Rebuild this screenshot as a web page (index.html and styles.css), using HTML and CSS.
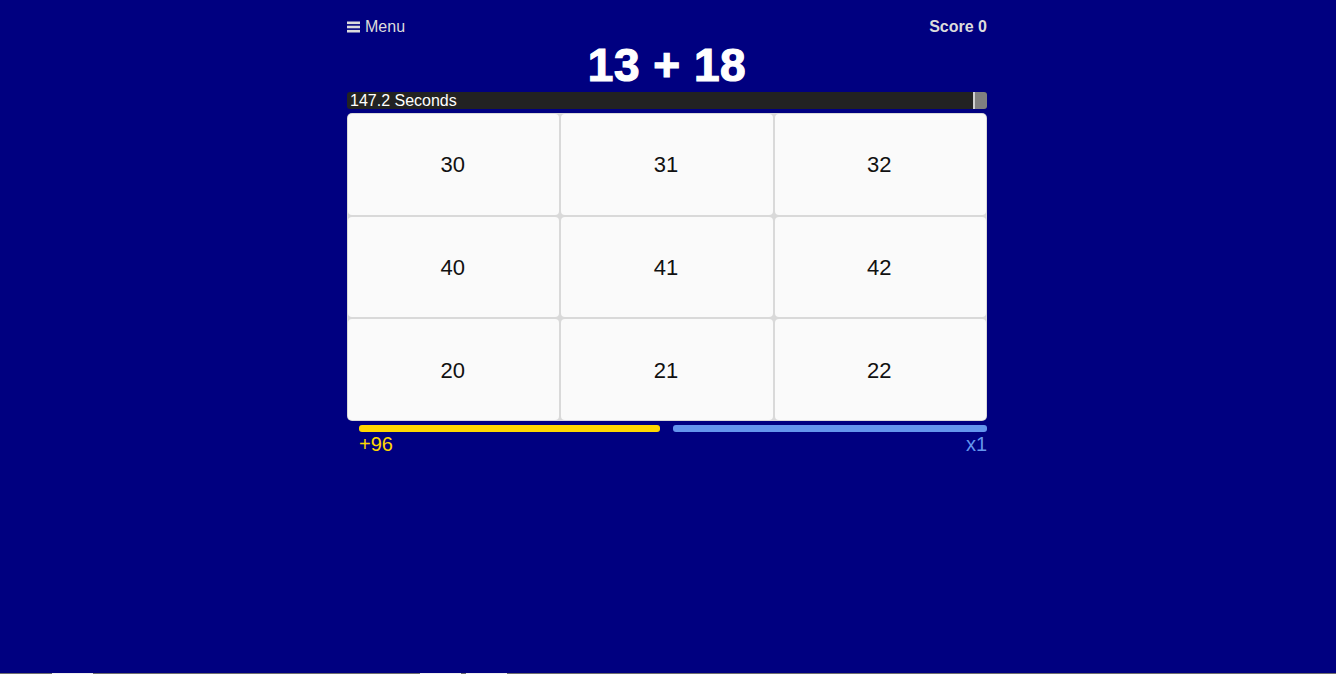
FILE: index.html
```html
<!DOCTYPE html>
<html>
<head>
<meta charset="utf-8">
<link rel="stylesheet" href="styles.css">
</head>
<body>
<div class="game">
  <div class="topbar">
    <span class="menu"><svg class="burger" width="13" height="12" viewBox="0 0 13 12"><rect x="0" y="0.5" width="13" height="2.6" fill="#dcdcdc"/><rect x="0" y="4.7" width="13" height="2.6" fill="#dcdcdc"/><rect x="0" y="8.9" width="13" height="2.6" fill="#dcdcdc"/></svg>Menu</span>
    <span class="score">Score 0</span>
  </div>
  <div class="question">13 + 18</div>
  <div class="timer">
    <span class="timer-text">147.2 Seconds</span>
    <span class="timer-end"></span>
  </div>
  <div class="grid">
    <div class="cell">30</div>
    <div class="cell">31</div>
    <div class="cell">32</div>
    <div class="cell">40</div>
    <div class="cell">41</div>
    <div class="cell">42</div>
    <div class="cell">20</div>
    <div class="cell">21</div>
    <div class="cell">22</div>
  </div>
  <div class="bars">
    <div class="bar bar-gold"></div>
    <div class="bar bar-blue"></div>
  </div>
  <div class="stats">
    <span class="bonus">+96</span>
    <span class="mult">x1</span>
  </div>
</div>
<div class="edge">
  <span class="edge-a"></span>
  <span class="edge-b"></span>
  <span class="edge-c"></span>
</div>
</body>
</html>
```
FILE: styles.css
```css
html, body {
  margin: 0;
  padding: 0;
  height: 100%;
  background: #000080;
  font-family: "Liberation Sans", Arial, sans-serif;
  overflow: hidden;
}
.game {
  width: 640px;
  margin: 0 auto;
  padding-top: 16px;
  position: relative;
  left: -1px;
}
.topbar {
  display: flex;
  justify-content: space-between;
  align-items: center;
  height: 20px;
  color: #dcdcdc;
}
.menu {
  display: flex;
  align-items: center;
  gap: 5px;
  font-size: 16px;
  padding-top: 2px;
}
.burger {
  display: block;
}
.score {
  font-size: 16px;
  font-weight: bold;
  padding-top: 2px;
}
.question {
  margin-top: 4px;
  height: 50px;
  line-height: 50px;
  text-align: center;
  color: #fff;
  font-size: 46px;
  font-weight: bold;
  -webkit-text-stroke: 1.2px #fff;
  letter-spacing: 0.5px;
}
.timer {
  margin-top: 2px;
  height: 17px;
  display: flex;
  background: #222;
  border-radius: 3px;
  overflow: hidden;
}
.timer-text {
  flex: 1;
  color: #fff;
  font-size: 16px;
  line-height: 17px;
  padding-left: 3px;
}
.timer-end {
  width: 12px;
  background: #808080;
  border-left: 2px solid #d0d0d0;
}
.grid {
  margin-top: 4px;
  display: grid;
  grid-template-columns: repeat(3, 1fr);
  grid-template-rows: repeat(3, 1fr);
  gap: 2px;
  padding: 1px;
  background: #d9d9d9;
  border-radius: 5px;
  height: 308px;
  box-sizing: border-box;
}
.cell {
  background: #fafafa;
  border-radius: 4px;
  display: flex;
  align-items: center;
  justify-content: center;
  font-size: 22px;
  color: #111;
  padding-right: 2px;
  padding-top: 2px;
}
.bars {
  margin-top: 4px;
  display: flex;
  height: 7px;
}
.bar {
  border-radius: 3px;
}
.bar-gold {
  margin-left: 12px;
  width: 301px;
  background: #ffd700;
}
.bar-blue {
  margin-left: 13px;
  flex: 1;
  background: #6495ed;
}
.stats {
  display: flex;
  justify-content: space-between;
  font-size: 20px;
  line-height: 22px;
  padding-left: 12px;
  margin-top: 1px;
}
.bonus {
  color: #ffd700;
}
.mult {
  color: #6495ed;
}
.edge {
  position: fixed;
  left: 0;
  right: 0;
  bottom: 0;
  height: 1px;
  background: #6e6e6e;
}
.edge span {
  position: absolute;
  top: 0;
  height: 1px;
  background: #eeeeee;
}
.edge-a { left: 52px; width: 41px; }
.edge-b { left: 420px; width: 41px; }
.edge-c { left: 466px; width: 41px; }
```
